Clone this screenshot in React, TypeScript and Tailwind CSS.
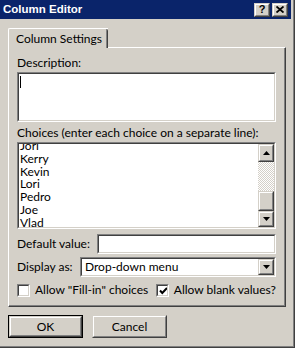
import React from 'react';

// Win2000-style "Column Editor" dialog
const FONT = "font-['Lato','Liberation_Sans',sans-serif]";

function Sunken({ className, children }: { className?: string; children?: React.ReactNode }) {
  return (
    <div className={`border border-t-[#808080] border-l-[#808080] border-r-white border-b-white ${className ?? ''}`}>
      <div className="h-full w-full border border-t-[#404040] border-l-[#404040] border-r-[#d4d0c8] border-b-[#d4d0c8] bg-white overflow-hidden">
        {children}
      </div>
    </div>
  );
}

function Raised({ className, children }: { className?: string; children?: React.ReactNode }) {
  return (
    <div className={`border border-t-[#d4d0c8] border-l-[#d4d0c8] border-r-[#404040] border-b-[#404040] bg-[#d4d0c8] ${className ?? ''}`}>
      <div className="h-full w-full border border-t-white border-l-white border-r-[#808080] border-b-[#808080] flex items-center justify-center">
        {children}
      </div>
    </div>
  );
}

function Arrow({ down }: { down?: boolean }) {
  return (
    <svg width="7" height="4" viewBox="0 0 7 4">
      <polygon points={down ? '0,0 7,0 3.5,4' : '0,4 7,4 3.5,0'} fill="#000" />
    </svg>
  );
}

function Checkbox({ checked }: { checked?: boolean }) {
  return (
    <Sunken className="w-[13px] h-[13px] shrink-0">
      {checked && (
        <svg width="11" height="11" viewBox="0 0 11 11" className="block">
          <path d="M2 4.5 L4.3 7 L9 2" stroke="#000" strokeWidth="2" fill="none" />
        </svg>
      )}
    </Sunken>
  );
}

function Button({ label, isDefault }: { label: string; isDefault?: boolean }) {
  return (
    <div className={`w-[75px] h-[23px] ${isDefault ? 'border border-black' : ''}`}>
      <Raised className="h-full w-full">
        <span className="text-[12px] text-black">{label}</span>
      </Raised>
    </div>
  );
}

const choices = ['Jori', 'Kerry', 'Kevin', 'Lori', 'Pedro', 'Joe', 'Vlad'];

export default function App() {
  return (
    <div className={`w-[295px] h-[348px] bg-[#d4d0c8] border-r border-b border-[#404040] overflow-hidden ${FONT}`}>
      <div className="h-full border-r border-b border-[#808080] pr-[2px] pb-[2px] flex flex-col">
        {/* Title bar */}
        <div className="h-[19px] bg-[#0a246a] flex items-center pl-[3px] pr-[3px]">
          <span className="text-white font-bold text-[11.5px] leading-none flex-1 font-['Liberation_Sans',sans-serif]">
            Column Editor
          </span>
          <Raised className="w-[16px] h-[14px]">
            <span className="text-[11px] font-bold leading-none text-black font-['Liberation_Sans',sans-serif]">?</span>
          </Raised>
          <Raised className="w-[16px] h-[14px] ml-[2px]">
            <svg width="8" height="7" viewBox="0 0 8 7">
              <path d="M0.5 0.5 L7.5 6.5 M7.5 0.5 L0.5 6.5" stroke="#000" strokeWidth="1.8" />
            </svg>
          </Raised>
        </div>

        {/* Tabs */}
        <div className="pl-[8px] pr-[5px] mt-[9px]">
          <div className="relative z-10 w-[100px] h-[20px] -mb-[1px] bg-[#d4d0c8] border-l border-t border-white rounded-tl-[2px] flex">
            <div className="flex-1 flex items-center pl-[7px] text-[12px] text-black">Column Settings</div>
            <div className="w-[2px] border-l border-[#808080] border-r border-r-[#404040] rounded-tr-[2px]" />
          </div>

          {/* Tab panel */}
          <div className="h-[260px] border-l border-t border-white border-r border-b border-r-[#404040] border-b-[#404040]">
            <div className="h-full border-r border-b border-[#808080] pl-[8px] pr-[8px] pt-[8px] text-[12px] text-black whitespace-nowrap">
              <div className="leading-[14px]">Description:</div>
              <Sunken className="mt-[2px] h-[50px] w-[259px]">
                <div className="ml-[1px] mt-[2px] w-[1px] h-[12px] bg-black" />
              </Sunken>

              <div className="leading-[14px] mt-[4px]">Choices (enter each choice on a separate line):</div>
              <Sunken className="mt-[2px] h-[87px] w-[259px]">
                <div className="flex h-full">
                  <div className="flex-1 pl-[1px] -mt-[4px] leading-[12.8px]">
                    {choices.map((c) => (
                      <div key={c}>{c}</div>
                    ))}
                  </div>
                  <div className="w-[16px] flex flex-col">
                    <Raised className="h-[18px]">
                      <Arrow />
                    </Raised>
                    <div className="h-[29px] bg-[image:repeating-conic-gradient(#ffffff_0_25%,#d4d0c8_0_50%)] bg-[length:2px_2px]" />
                    <Raised className="flex-1" />
                    <Raised className="h-[16px]">
                      <Arrow down />
                    </Raised>
                  </div>
                </div>
              </Sunken>

              <div className="flex items-center mt-[5px] h-[20px]">
                <span className="w-[80px]">Default value:</span>
                <Sunken className="h-[20px] flex-1" />
              </div>

              <div className="flex items-center mt-[3px] h-[20px]">
                <span className="w-[63px]">Display as:</span>
                <Sunken className="h-[20px] flex-1">
                  <div className="flex h-full items-center">
                    <span className="flex-1 pl-[3px]">Drop-down menu</span>
                    <Raised className="w-[16px] h-full">
                      <Arrow down />
                    </Raised>
                  </div>
                </Sunken>
              </div>

              <div className="flex items-center mt-[6px] h-[14px]">
                <Checkbox />
                <span className="ml-[5px] w-[121px]">Allow "Fill-in" choices</span>
                <Checkbox checked />
                <span className="ml-[5px]">Allow blank values?</span>
              </div>
            </div>
          </div>
        </div>

        {/* Dialog buttons */}
        <div className="flex pl-[8px] mt-[8px] gap-[9px]">
          <Button label="OK" isDefault />
          <Button label="Cancel" />
        </div>
      </div>
    </div>
  );
}
